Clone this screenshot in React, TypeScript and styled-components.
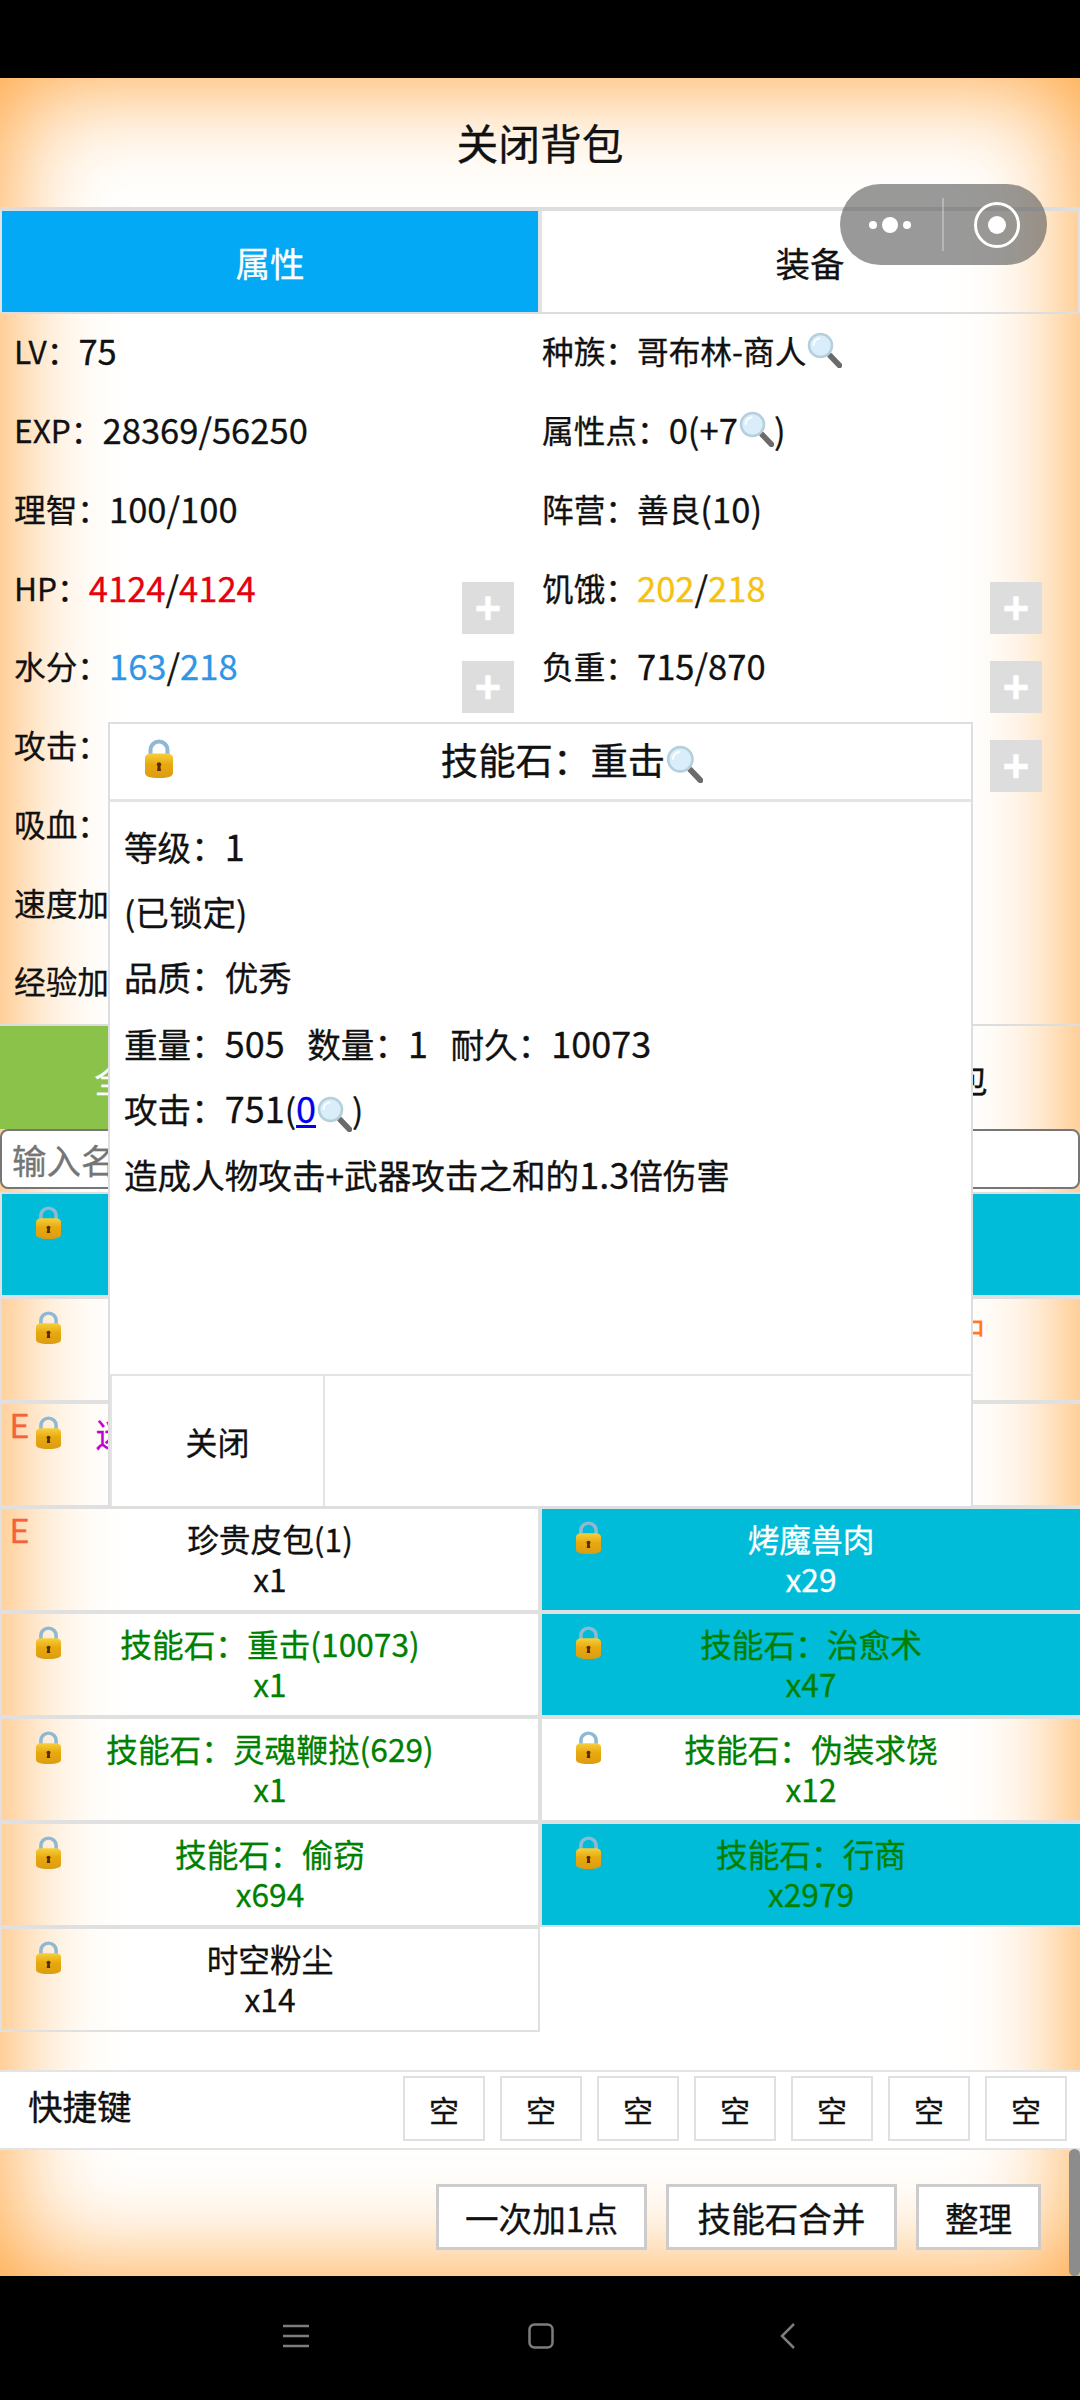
import styled, { createGlobalStyle } from "styled-components";

const GlobalStyle = createGlobalStyle`
  html, body {
    margin: 0;
    padding: 0;
    background: #000;
  }
  * {
    box-sizing: border-box;
  }
`;

type Item = {
  name: string;
  count: string;
  color: string;
  teal?: boolean;
  lock?: boolean;
  equipped?: boolean;
};

const GREEN = "#008000";

const items: Item[] = [
  { name: "", count: "", color: "#fff", teal: true, lock: true },
  { name: "", count: "", color: "#fff", teal: true },
  { name: "", count: "", color: "#111", lock: true },
  { name: "技能石：灵魂碎片合成中", count: "", color: "#ff7a1a" },
  { name: "迷雾森林的探险者手记本", count: "", color: "#c000d0", lock: true, equipped: true },
  { name: "", count: "", color: "#111" },
  { name: "珍贵皮包(1)", count: "x1", color: "#111", equipped: true },
  { name: "烤魔兽肉", count: "x29", color: "#fff", teal: true, lock: true },
  { name: "技能石：重击(10073)", count: "x1", color: GREEN, lock: true },
  { name: "技能石：治愈术", count: "x47", color: GREEN, teal: true, lock: true },
  { name: "技能石：灵魂鞭挞(629)", count: "x1", color: GREEN, lock: true },
  { name: "技能石：伪装求饶", count: "x12", color: GREEN, lock: true },
  { name: "技能石：偷窃", count: "x694", color: GREEN, lock: true },
  { name: "技能石：行商", count: "x2979", color: GREEN, teal: true, lock: true },
  { name: "时空粉尘", count: "x14", color: "#111", lock: true },
];

const LockIcon = ({ width, height }: { width: number; height: number }): JSX.Element => (
  <svg width={width} height={height} viewBox="0 0 28 39" preserveAspectRatio="none">
    <defs>
      <linearGradient id="lockBody" x1="0" y1="0" x2="0" y2="1">
        <stop offset="0" stopColor="#f6cf3c" />
        <stop offset="0.45" stopColor="#e8a90f" />
        <stop offset="1" stopColor="#dc9c12" />
      </linearGradient>
    </defs>
    <path d="M5.500 18V11a8.500 8.500 0 0 1 17 0v7" fill="none" stroke="#8fb8d2" strokeWidth="4" />
    <path d="M0 19c0-3 3-4.500 6-4.500h16c3 0 6 1.500 6 4.500v15c0 3-4 5-14 5S0 37 0 34z" fill="url(#lockBody)" />
    <circle cx="14" cy="25.500" r="2.200" fill="#5c2c06" />
    <path d="M12.800 26h2.400l.8 6h-4z" fill="#5c2c06" />
  </svg>
);

const SearchIcon = ({ size }: { size: number }): JSX.Element => (
  <InlineSvg width={size} height={size} viewBox="0 0 36 36">
    <path d="M24 23.500l9.500 10" stroke="#6b6b6b" strokeWidth="5.500" strokeLinecap="round" />
    <circle cx="14.500" cy="13.500" r="11.500" fill="#d9eefa" stroke="#b5cfdd" strokeWidth="2.500" />
    <path d="M7.500 13a7 7 0 0 1 6-6.500" fill="none" stroke="#fff" strokeWidth="2" strokeLinecap="round" />
  </InlineSvg>
);

const App = (): JSX.Element => {
  return (
    <ScreenS>
      <GlobalStyle />
      <StatusBarS />
      <PageS>
        <TitleS>关闭背包</TitleS>
        <TabRowS>
          <TabS $active>属性</TabS>
          <TabS>装备</TabS>
        </TabRowS>

        <StatGridS>
          <StatS>
            <LabelS>LV：</LabelS>75
          </StatS>
          <StatS>
            <LabelS>种族：哥布林-商人</LabelS>
            <SearchIcon size={36} />
          </StatS>
          <StatS>
            <LabelS>EXP：</LabelS>28369/56250
          </StatS>
          <StatS>
            <LabelS>属性点：</LabelS>0(+7
            <SearchIcon size={36} />)
          </StatS>
          <StatS>
            <LabelS>理智：</LabelS>100/100
          </StatS>
          <StatS>
            <LabelS>阵营：善良</LabelS>(10)
          </StatS>
          <StatS>
            <LabelS>HP：</LabelS>
            <ValueS $color="#e8000d">4124</ValueS>/<ValueS $color="#e8000d">4124</ValueS>
            <PlusS>+</PlusS>
          </StatS>
          <StatS>
            <LabelS>饥饿：</LabelS>
            <ValueS $color="#f5c211">202</ValueS>/<ValueS $color="#f5c211">218</ValueS>
            <PlusS>+</PlusS>
          </StatS>
          <StatS>
            <LabelS>水分：</LabelS>
            <ValueS $color="#2f96e6">163</ValueS>/<ValueS $color="#2f96e6">218</ValueS>
            <PlusS>+</PlusS>
          </StatS>
          <StatS>
            <LabelS>负重：</LabelS>715/870
            <PlusS>+</PlusS>
          </StatS>
          <StatS>
            <LabelS>攻击：</LabelS>
          </StatS>
          <StatS>
            <PlusS>+</PlusS>
          </StatS>
          <StatS>
            <LabelS>吸血：</LabelS>
          </StatS>
          <StatS />
          <StatS>
            <LabelS>速度加成：</LabelS>
          </StatS>
          <StatS />
          <StatS>
            <LabelS>经验加成：</LabelS>
          </StatS>
          <StatS />
        </StatGridS>

        <FilterRowS>
          <FilterS $active>全部</FilterS>
          <FilterS>装备</FilterS>
          <FilterS>道具</FilterS>
          <FilterS>背包</FilterS>
        </FilterRowS>

        <SearchInputS placeholder="输入名称" readOnly />

        <ItemGridS>
          {items.map((el, idx) => {
            return (
              <ItemS key={idx} $teal={el.teal}>
                {el.equipped && <EquipMarkS>E</EquipMarkS>}
                {el.lock && (
                  <ItemLockS>
                    <LockIcon width={25} height={33} />
                  </ItemLockS>
                )}
                <ItemTextS $color={el.color}>
                  <div>{el.name}</div>
                  <div>{el.count}</div>
                </ItemTextS>
              </ItemS>
            );
          })}
        </ItemGridS>

        <ShortcutRowS>
          <ShortcutLabelS>快捷键</ShortcutLabelS>
          <SlotListS>
            {[0, 1, 2, 3, 4, 5, 6].map((idx) => {
              return <SlotS key={idx}>空</SlotS>;
            })}
          </SlotListS>
        </ShortcutRowS>

        <ActionRowS>
          <ActionBtnS $width={211}>一次加1点</ActionBtnS>
          <ActionBtnS $width={231}>技能石合并</ActionBtnS>
          <ActionBtnS $width={125}>整理</ActionBtnS>
        </ActionRowS>

        <ModalS>
          <ModalHeadS>
            <ModalLockS>
              <LockIcon width={28} height={39} />
            </ModalLockS>
            <ModalTitleS>
              技能石：重击
              <SearchIcon size={38} />
            </ModalTitleS>
          </ModalHeadS>
          <ModalBodyS>
            <ModalLineS>
              等级：<NumS>1</NumS>
            </ModalLineS>
            <ModalLineS>(已锁定)</ModalLineS>
            <ModalLineS>品质：优秀</ModalLineS>
            <ModalLineS>
              重量：<NumS>505</NumS>&nbsp;&nbsp;&nbsp;数量：<NumS>1</NumS>&nbsp;&nbsp;&nbsp;耐久：<NumS>10073</NumS>
            </ModalLineS>
            <ModalLineS>
              攻击：<NumS>751</NumS>(
              <LinkS>
                <NumS>0</NumS>
                <SearchIcon size={36} />
              </LinkS>
              )
            </ModalLineS>
            <ModalLineS>
              造成人物攻击+武器攻击之和的<NumS>1.3</NumS>倍伤害
            </ModalLineS>
          </ModalBodyS>
          <ModalFootS>
            <CloseBtnS>关闭</CloseBtnS>
          </ModalFootS>
        </ModalS>

        <CapsuleS>
          <svg width="207" height="81" viewBox="0 0 207 81">
            <circle cx="33" cy="41" r="4" fill="#fff" />
            <circle cx="50" cy="41" r="8" fill="#fff" />
            <circle cx="67" cy="41" r="4" fill="#fff" />
            <rect x="102" y="14" width="2" height="53" fill="#fff" opacity="0.3" />
            <circle cx="157" cy="41" r="21.500" fill="none" stroke="#fff" strokeWidth="3" />
            <circle cx="157" cy="41" r="9" fill="#fff" />
          </svg>
        </CapsuleS>
        <ScrollThumbS />
      </PageS>

      <NavBarS>
        <svg width="26" height="24" viewBox="0 0 26 24">
          <path d="M0 2h26M0 12h26M0 22h26" stroke="#7d7d7d" strokeWidth="2.500" />
        </svg>
        <svg width="26" height="26" viewBox="0 0 26 26">
          <rect x="1.500" y="1.500" width="23" height="23" rx="5" fill="none" stroke="#7d7d7d" strokeWidth="2.500" />
        </svg>
        <svg width="16" height="26" viewBox="0 0 16 26">
          <path d="M14 1L2 13l12 12" fill="none" stroke="#7d7d7d" strokeWidth="2.500" />
        </svg>
      </NavBarS>
    </ScreenS>
  );
};

export default App;

const InlineSvg = styled.svg`
  vertical-align: middle;
`;

const ScreenS = styled.div`
  display: flex;
  flex-direction: column;
  width: 1080px;
  height: 2400px;
  overflow: hidden;
  background: #000;
  color: #111;
  font-family: "Noto Sans CJK SC", "Noto Sans", sans-serif;
  font-size: 34.56px;
  -webkit-text-stroke: 0.3px currentColor;
`;

const StatusBarS = styled.div`
  height: 78px;
  flex: none;
`;

const PageS = styled.main`
  position: relative;
  display: flex;
  flex-direction: column;
  height: 2198px;
  flex: none;
  background: #fff;
  box-shadow: inset 0 0 110px #ff9d2e;
`;

const TitleS = styled.h1`
  display: flex;
  align-items: center;
  justify-content: center;
  height: 129px;
  margin: 0;
  padding-bottom: 2px;
  font-size: 41.760px;
  font-weight: 400;
`;

const TabRowS = styled.nav`
  display: grid;
  grid-template-columns: 540px 540px;
  height: 107px;
  border-top: 4px solid #ddd;
  border-bottom: 2px solid #ddd;
`;

const TabS = styled.div<{ $active?: boolean }>`
  display: flex;
  align-items: center;
  justify-content: center;
  border: 2px solid #e2e2e2;
  border-width: 0 2px;
  background: ${(props) => (props.$active ? "#03a9f4" : "transparent")};
  background-clip: padding-box;
  color: ${(props) => (props.$active ? "#fff" : "#111")};
`;

const StatGridS = styled.section`
  display: grid;
  grid-template-columns: 540px 540px;
  grid-auto-rows: 78.750px;
  height: 710px;
`;

const PlusS = styled.span`
  position: absolute;
  top: 32px;
  right: 26px;
  display: flex;
  align-items: center;
  justify-content: center;
  width: 52px;
  height: 52px;
  background: #dddddd;
  color: #fff;
  font-family: "Liberation Sans", sans-serif;
  font-size: 46px;
  font-weight: bold;
`;

const StatS = styled.div`
  position: relative;
  display: flex;
  align-items: center;
  padding-bottom: 6px;
  padding-left: 14px;
  white-space: pre;

  &:nth-child(even) {
    padding-left: 2px;

    ${PlusS} {
      right: 38px;
    }
  }
`;

const LabelS = styled.span`
  font-size: 31.680px;
`;

const ValueS = styled.span<{ $color: string }>`
  color: ${(props) => props.$color};
`;

const FilterRowS = styled.nav`
  display: grid;
  grid-template-columns: 258px 284px 284px 254px;
  height: 105px;
  border-top: 2px solid #ddd;
`;

const FilterS = styled.div<{ $active?: boolean }>`
  display: flex;
  align-items: center;
  justify-content: center;
  background: ${(props) => (props.$active ? "#8bc34a" : "transparent")};
  color: ${(props) => (props.$active ? "#fff" : "#111")};
`;

const SearchInputS = styled.input`
  display: block;
  width: 1080px;
  height: 60px;
  padding: 0 10px;
  border: 2px solid #767676;
  border-radius: 8px;
  background: #fff;
  color: #111;
  font-family: inherit;
  font-size: 34.56px;
  outline: none;

  &::placeholder {
    color: #757575;
  }
`;

const ItemGridS = styled.section`
  display: grid;
  grid-template-columns: 540px 540px;
  grid-auto-rows: 105px;
  margin-top: 3px;
  margin-bottom: 38px;
`;

const ItemS = styled.div<{ $teal?: boolean }>`
  position: relative;
  border: 2px solid #e0e0e0;
  background: ${(props) => (props.$teal ? "#00bcd8" : "transparent")};
  background-clip: padding-box;

  &:nth-child(even) {
    border-right: none;
  }
`;

const ItemLockS = styled.span`
  position: absolute;
  top: 12px;
  left: 34px;
  line-height: 0;
`;

const EquipMarkS = styled.span`
  position: absolute;
  top: 3px;
  left: 8px;
  color: #f4623a;
  font-family: "Roboto", sans-serif;
  font-size: 33px;
  line-height: 40px;
`;

const ItemTextS = styled.div<{ $color: string }>`
  padding-top: 9px;
  color: ${(props) => props.$color};
  font-size: 31.680px;
  line-height: 40px;
  text-align: center;
  white-space: nowrap;
`;

const ShortcutRowS = styled.section`
  display: flex;
  align-items: center;
  justify-content: space-between;
  height: 80px;
  padding-left: 28px;
  border-top: 2px solid #e4e4e4;
  border-bottom: 2px solid #e4e4e4;
  background: #fff;
`;

const ShortcutLabelS = styled.span`
  margin-bottom: 10px;
`;

const SlotListS = styled.ul`
  display: flex;
  gap: 15px;
  margin: 0 13px 3px 0;
  padding: 0;
  list-style: none;
`;

const SlotS = styled.li`
  display: flex;
  align-items: center;
  justify-content: center;
  width: 82px;
  height: 65px;
  border: 2px solid #e0e0e0;
  background: #fff;
  font-size: 30px;
`;

const ActionRowS = styled.footer`
  display: flex;
  justify-content: flex-end;
  gap: 19px;
  padding: 34px 39px 0 0;
`;

const ActionBtnS = styled.button<{ $width: number }>`
  width: ${(props) => props.$width}px;
  height: 66px;
  padding: 0;
  border: 3px solid #ccc;
  background: #fff;
  color: #111;
  font-family: inherit;
  font-size: 33.600px;
`;

const ModalS = styled.section`
  position: absolute;
  top: 644px;
  left: 108px;
  display: flex;
  flex-direction: column;
  width: 865px;
  height: 786px;
  border: 2px solid #dedede;
  background: #fff;
`;

const ModalHeadS = styled.header`
  display: flex;
  align-items: center;
  height: 78px;
  flex: none;
  padding-bottom: 6px;
  border-bottom: 3px solid #e4e4e4;
`;

const ModalLockS = styled.span`
  display: flex;
  justify-content: flex-end;
  width: 63px;
  line-height: 0;
`;

const ModalTitleS = styled.h2`
  flex: 1;
  margin: 0;
  font-size: 37.440px;
  font-weight: 400;
  text-align: center;
`;

const ModalBodyS = styled.div`
  flex: 1;
  padding: 11px 14px 0;
  font-size: 33.600px;
`;

const ModalLineS = styled.p`
  height: 65.500px;
  margin: 0;
  line-height: 65px;
  white-space: pre;
`;

const NumS = styled.span`
  font-size: 36px;
`;

const LinkS = styled.span`
  color: #0000ee;
  text-decoration: underline;
`;

const ModalFootS = styled.footer`
  height: 132px;
  flex: none;
  border-top: 2px solid #e4e4e4;
`;

const CloseBtnS = styled.div`
  display: flex;
  align-items: center;
  justify-content: center;
  width: 215px;
  height: 100%;
  border-right: 2px solid #e4e4e4;
  border-left: 2px solid #e4e4e4;
  font-size: 32px;
`;

const CapsuleS = styled.div`
  position: absolute;
  top: 106px;
  left: 840px;
  width: 207px;
  height: 81px;
  border-radius: 41px;
  background: rgba(90, 90, 90, 0.62);
  line-height: 0;
  -webkit-text-stroke: 0;
`;

const ScrollThumbS = styled.div`
  position: absolute;
  right: 0;
  bottom: 0;
  width: 11px;
  height: 127px;
  border-radius: 6px;
  background: #8c8c8c;
`;

const NavBarS = styled.nav`
  display: grid;
  grid-template-columns: 245px 252px 1fr;
  align-items: center;
  flex: 1;
  padding-bottom: 4px;
  padding-left: 283px;
  background: #000;
`;
